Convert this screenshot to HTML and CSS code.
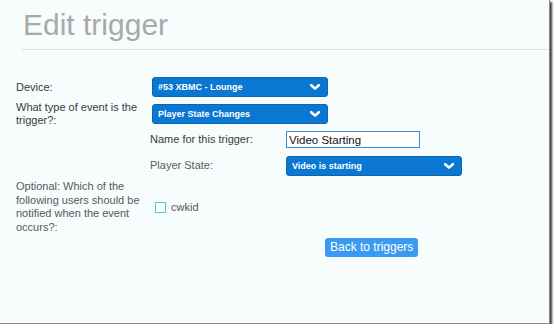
FILE: index.html
```html
<!DOCTYPE html>
<html lang="en">
<head>
  <meta charset="UTF-8" />
  <title>Edit trigger</title>
  <link rel="stylesheet" href="styles.css">
</head>
<body>
  <div class="window">
    <div class="header">
      <h1>Edit trigger</h1>
    </div>

    <div class="form">
      <label class="label">Device:</label>
      <div class="select wide">
        <span>#53 XBMC - Lounge</span>
        <svg class="chev" width="10" height="6" viewBox="0 0 10 6"><polyline points="1.2,1.2 5,4.6 8.8,1.2" /></svg>
      </div>

      <label class="label">What type of event is the trigger?:</label>
      <div class="select wide">
        <span>Player State Changes</span>
        <svg class="chev" width="10" height="6" viewBox="0 0 10 6"><polyline points="1.2,1.2 5,4.6 8.8,1.2" /></svg>
      </div>

      <div class="subform">
        <label class="label">Name for this trigger:</label>
        <input class="text-input" type="text" value="Video Starting">

        <label class="label muted">Player State:</label>
        <div class="select">
          <span>Video is starting</span>
          <svg class="chev" width="10" height="6" viewBox="0 0 10 6"><polyline points="1.2,1.2 5,4.6 8.8,1.2" /></svg>
        </div>
      </div>

      <label class="label muted">Optional: Which of the following users should be notified when the event occurs?:</label>
      <div class="users">
        <span class="check"></span>
        <span>cwkid</span>
      </div>

      <div class="actions">
        <button class="btn">Back to triggers</button>
      </div>
    </div>
  </div>
</body>
</html>
```

FILE: styles.css
```css
body {
  margin: 0;
  background: #ffffff;
  font-family: "Liberation Sans", Arial, sans-serif;
}

.window {
  width: 549px;
  height: 323px;
  background: #f7fcfd;
  border-right: 1px solid #8a8a8a;
  border-bottom: 1px solid #8a8a8a;
  box-shadow: 2px 2px 2px #3a3a3a;
  overflow: hidden;
}

.header {
  margin-left: 22px;
  padding-top: 7px;
  padding-bottom: 6px;
  border-bottom: 1px solid #dcdfe0;
}

.header h1 {
  margin: 0 0 0 1px;
  font-size: 30px;
  line-height: 36px;
  font-weight: normal;
  color: #a9a9a9;
}

.form {
  display: grid;
  grid-template-columns: 136px 1fr;
  row-gap: 4px;
  align-items: center;
  padding: 27px 0 0 16px;
}

.label {
  font-size: 11px;
  line-height: 13px;
  color: #3a3a3a;
  padding-right: 6px;
}

.label.muted {
  color: #5a5a5a;
  line-height: 13.5px;
}

.select {
  display: flex;
  align-items: center;
  justify-content: space-between;
  box-sizing: border-box;
  width: 176px;
  height: 20px;
  padding: 0 7px 0 5px;
  background: #0a78d2;
  border: 1px solid #0866b4;
  border-radius: 3px;
  color: #ffffff;
  font-size: 9px;
  font-weight: bold;
}

.chev polyline {
  fill: none;
  stroke: #ffffff;
  stroke-width: 2.6;
  stroke-linecap: round;
  stroke-linejoin: round;
}

.subform {
  grid-column: 2;
  display: grid;
  grid-template-columns: 136px 1fr;
  row-gap: 8px;
  align-items: center;
  margin-left: -2px;
}

.text-input {
  box-sizing: border-box;
  width: 134px;
  height: 17px;
  margin: 0;
  padding: 0 2px;
  border: 1px solid #3a8be0;
  background: #ffffff;
  font-family: "Liberation Sans", Arial, sans-serif;
  font-size: 11.5px;
  color: #111111;
  outline: none;
}

.users {
  display: flex;
  align-items: center;
  gap: 5px;
  padding-left: 3px;
  font-size: 11px;
  color: #555555;
}

.check {
  box-sizing: border-box;
  width: 11px;
  height: 11px;
  border: 1px solid #5cc3d4;
  background: #ffffff;
}

.actions {
  grid-column: 2;
  margin-top: -1px;
  padding-left: 173px;
}

.btn {
  height: 19px;
  padding: 0 5px;
  background: #3b9bf2;
  border: none;
  border-radius: 3px;
  color: #ffffff;
  font-family: "Liberation Sans", Arial, sans-serif;
  font-size: 12px;
  cursor: pointer;
}
```
